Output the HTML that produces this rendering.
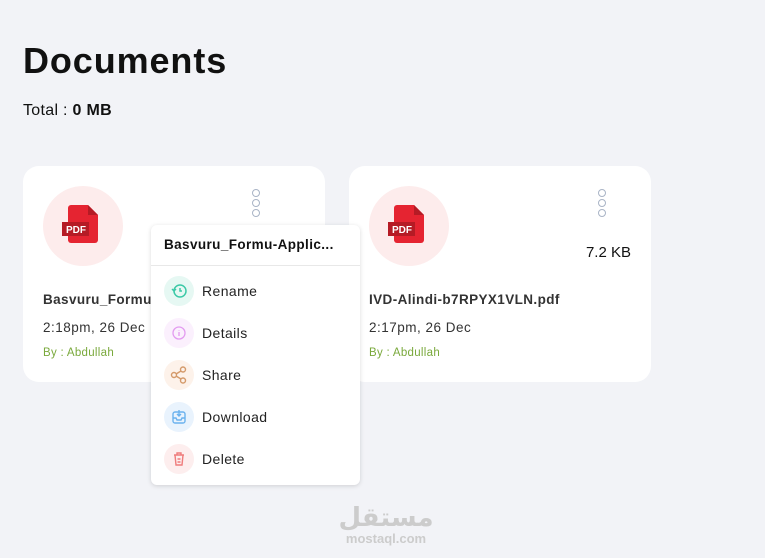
<!DOCTYPE html>
<html><head><meta charset="utf-8"><style>
*{box-sizing:border-box;margin:0;padding:0}
body{width:765px;height:558px;background:#f2f3f7;font-family:"Liberation Sans",sans-serif;position:relative;overflow:hidden;color:#111}
h1{position:absolute;left:23px;top:40px;font-size:36px;font-weight:700;letter-spacing:0.9px}
.total{position:absolute;left:23px;top:102px;font-size:16px;letter-spacing:0.3px}
.card{position:absolute;top:166px;width:302px;height:216px;background:#fff;border-radius:16px}
.circ{position:absolute;left:20px;top:20px;width:80px;height:80px;border-radius:50%;background:#fdecec}
.dots{position:absolute;top:23px;width:8px}
.dots i{display:block;width:8px;height:8px;border:1.5px solid #a9b4c6;border-radius:50%;margin-bottom:2px}
.name{position:absolute;left:20px;top:126px;font-size:13.5px;font-weight:700;color:#333;letter-spacing:0.4px}
.time{position:absolute;left:20px;top:154px;font-size:13.5px;color:#333;letter-spacing:0.5px}
.by{position:absolute;left:20px;top:181px;font-size:11.5px;color:#7aa93c;letter-spacing:0.3px}
.menu{position:absolute;left:151px;top:225px;width:209px;height:260px;background:#fff;border-radius:6px;box-shadow:0 1px 5px rgba(0,0,0,.15)}
.mh{height:41px;border-bottom:1px solid #e8e8e8;padding:12px 13px;font-size:13.5px;font-weight:700;letter-spacing:0.4px}
.it{position:absolute;left:13px;width:190px;height:30px;font-size:14px;color:#222;letter-spacing:0.4px}
.it .ic{position:absolute;left:0;top:0;width:30px;height:30px;border-radius:50%}
.it span{position:absolute;left:38px;top:7px}
.wm{position:absolute;left:336px;top:505px;color:#ccc;font-size:13px;font-weight:700;text-align:center;width:100px}
</style></head><body>
<h1>Documents</h1>
<div class="total">Total : <b>0 MB</b></div>

<div class="card" style="left:23px">
 <div class="circ"><svg width="80" height="80" viewBox="0 0 80 80"><path d="M28 19h17l10 10v25a3 3 0 0 1-3 3H28a3 3 0 0 1-3-3V22a3 3 0 0 1 3-3z" fill="#e52431"/><path d="M45 19v10h10z" fill="#b51b25"/><rect x="19" y="36" width="27" height="14" fill="#b51b25"/><text x="23" y="47" font-size="10" fill="#fff" font-family="Liberation Sans" font-weight="700">PDF</text></svg></div>
 <div class="dots" style="left:229px"><i></i><i></i><i></i></div>
 <div class="name">Basvuru_Formu</div>
 <div class="time">2:18pm, 26 Dec</div>
 <div class="by">By : Abdullah</div>
</div>

<div class="card" style="left:349px">
 <div class="circ"><svg width="80" height="80" viewBox="0 0 80 80"><path d="M28 19h17l10 10v25a3 3 0 0 1-3 3H28a3 3 0 0 1-3-3V22a3 3 0 0 1 3-3z" fill="#e52431"/><path d="M45 19v10h10z" fill="#b51b25"/><rect x="19" y="36" width="27" height="14" fill="#b51b25"/><text x="23" y="47" font-size="10" fill="#fff" font-family="Liberation Sans" font-weight="700">PDF</text></svg></div>
 <div class="dots" style="left:249px"><i></i><i></i><i></i></div>
 <div style="position:absolute;right:20px;top:78px;font-size:15px">7.2 KB</div>
 <div class="name">IVD-Alindi-b7RPYX1VLN.pdf</div>
 <div class="time">2:17pm, 26 Dec</div>
 <div class="by">By : Abdullah</div>
</div>

<div class="menu">
 <div class="mh">Basvuru_Formu-Applic...</div>
 <div class="it" style="top:51px"><div class="ic" style="background:#e6f8f3"><svg width="30" height="30"><circle cx="16" cy="15" r="6" fill="none" stroke="#3cc9a7" stroke-width="1.5"/><path d="M16 12v3h2M8 13l2 2 2-2" fill="none" stroke="#3cc9a7" stroke-width="1.5"/></svg></div><span>Rename</span></div>
 <div class="it" style="top:93px"><div class="ic" style="background:#fbf0fd"><svg width="30" height="30"><circle cx="15" cy="15" r="6" fill="none" stroke="#e39bf0" stroke-width="1.3"/><path d="M15 14v4M15 12v.5" stroke="#e39bf0" stroke-width="1.3"/></svg></div><span>Details</span></div>
 <div class="it" style="top:135px"><div class="ic" style="background:#fdf2ea"><svg width="30" height="30" fill="none" stroke="#d49a6a" stroke-width="1.4"><circle cx="10" cy="15" r="2.5"/><circle cx="19" cy="9.5" r="2.5"/><circle cx="19" cy="20.5" r="2.5"/><path d="M12 14l5-3M12 16l5 3"/></svg></div><span>Share</span></div>
 <div class="it" style="top:177px"><div class="ic" style="background:#e9f3fd"><svg width="30" height="30" fill="none" stroke="#6bb2ee" stroke-width="1.4"><rect x="9" y="10" width="12" height="11" rx="2"/><path d="M15 8v6M13 12l2 2 2-2M9 16h3l1 2h4l1-2h3"/></svg></div><span>Download</span></div>
 <div class="it" style="top:219px"><div class="ic" style="background:#fdeeee"><svg width="30" height="30" fill="none" stroke="#ef7c7c" stroke-width="1.4"><path d="M10 11h10M13 11V9h4v2M11 11l1 10h6l1-10M13.5 15h3M13.5 18h3"/></svg></div><span>Delete</span></div>
</div>

<div class="wm"><div style="font-size:26px;line-height:26px;font-family:'DejaVu Sans',sans-serif">مستقل</div>mostaql.com</div>
</body></html>
